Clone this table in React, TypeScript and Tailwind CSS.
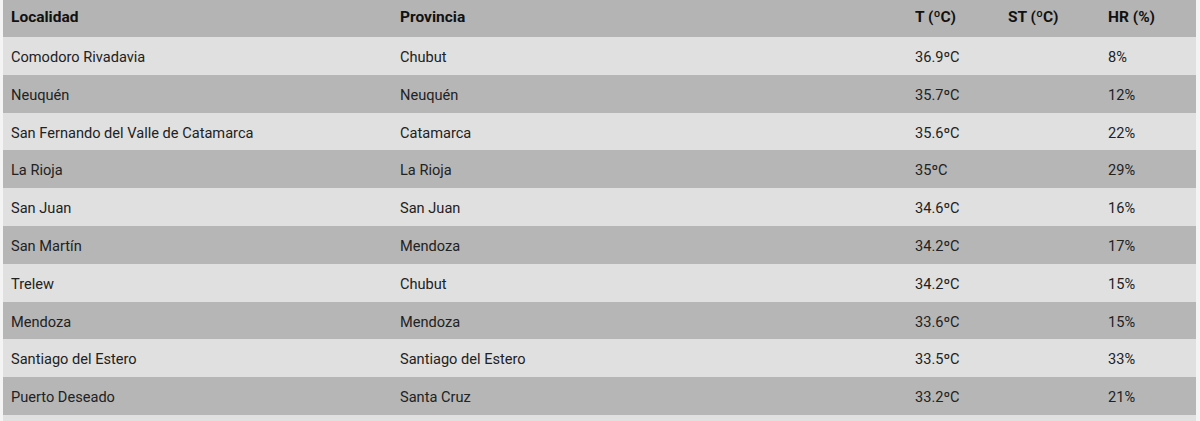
const rows = [
  ["Comodoro Rivadavia", "Chubut", "36.9ºC", "", "8%"],
  ["Neuquén", "Neuquén", "35.7ºC", "", "12%"],
  ["San Fernando del Valle de Catamarca", "Catamarca", "35.6ºC", "", "22%"],
  ["La Rioja", "La Rioja", "35ºC", "", "29%"],
  ["San Juan", "San Juan", "34.6ºC", "", "16%"],
  ["San Martín", "Mendoza", "34.2ºC", "", "17%"],
  ["Trelew", "Chubut", "34.2ºC", "", "15%"],
  ["Mendoza", "Mendoza", "33.6ºC", "", "15%"],
  ["Santiago del Estero", "Santiago del Estero", "33.5ºC", "", "33%"],
  ["Puerto Deseado", "Santa Cruz", "33.2ºC", "", "21%"],
  ["", "", "", "", ""],
];

const headers = ["Localidad", "Provincia", "T (ºC)", "ST (ºC)", "HR (%)"];

export default function App() {
  return (
    <div className="h-[421px] overflow-hidden bg-[#f4f4f4] pl-[3px] font-['Roboto',sans-serif] text-[14.6px] text-[#222]">
      <div className="w-[1193px]">
        {/* Header */}
        <div className="grid h-[37px] grid-cols-[389px_515px_93px_100px_96px] items-center bg-[#b4b4b4] pb-[2px] text-[15.5px] font-bold text-[#111]">
          {headers.map((h) => (
            <div key={h} className="px-2">
              {h}
            </div>
          ))}
        </div>

        {/* Rows */}
        {rows.map((r, i) => (
          <div
            key={i}
            className={
              "grid h-[37.8px] grid-cols-[389px_515px_93px_100px_96px] items-center pt-[4px] " +
              (i % 2 === 0 ? "bg-[#e0e0e0]" : "bg-[#b6b6b6]")
            }
          >
            {r.map((c, j) => (
              <div key={j} className="px-2">
                {c}
              </div>
            ))}
          </div>
        ))}
      </div>
    </div>
  );
}
